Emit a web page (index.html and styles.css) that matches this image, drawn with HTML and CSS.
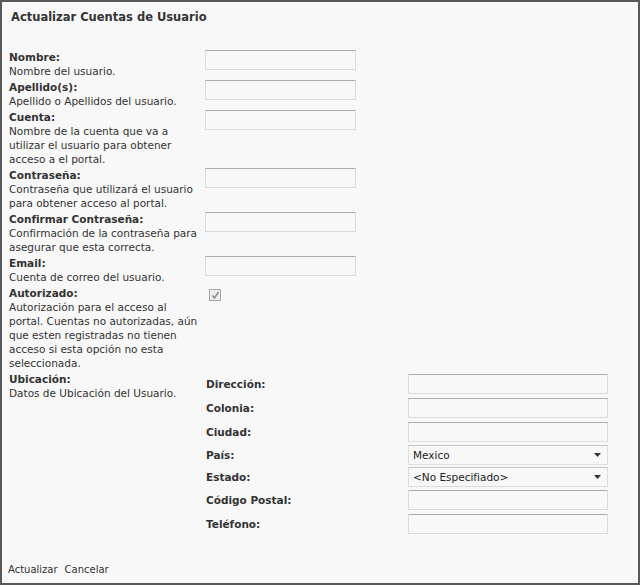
FILE: index.html
```html
<!DOCTYPE html>
<html lang="es">
<head>
<meta charset="utf-8">
<title>Actualizar Cuentas de Usuario</title>
<link rel="stylesheet" href="styles.css">
</head>
<body>
<div class="panel">
  <h1 class="title">Actualizar Cuentas de Usuario</h1>
  <div class="form">
    <div class="desc"><b>Nombre:</b><br>Nombre del usuario.</div>
    <div class="field"><span class="input"></span></div>

    <div class="desc"><b>Apellido(s):</b><br>Apellido o Apellidos del usuario.</div>
    <div class="field"><span class="input"></span></div>

    <div class="desc"><b>Cuenta:</b><br>Nombre de la cuenta que va a utilizar el usuario para obtener acceso a el portal.</div>
    <div class="field"><span class="input"></span></div>

    <div class="desc"><b>Contraseña:</b><br>Contraseña que utilizará el usuario para obtener acceso al portal.</div>
    <div class="field"><span class="input"></span></div>

    <div class="desc"><b>Confirmar Contraseña:</b><br>Confirmación de la contraseña para asegurar que esta correcta.</div>
    <div class="field"><span class="input"></span></div>

    <div class="desc"><b>Email:</b><br>Cuenta de correo del usuario.</div>
    <div class="field"><span class="input"></span></div>

    <div class="desc"><b>Autorizado:</b><br>Autorización para el acceso al portal. Cuentas no autorizadas, aún que esten registradas no tienen acceso si esta opción no esta seleccionada.</div>
    <div class="field"><span class="check"><svg width="9" height="9" viewBox="0 0 9 9"><path d="M1.5 4.5 L3.5 7 L7.5 1" fill="none" stroke="#8a8a8a" stroke-width="1.4"/></svg></span></div>

    <div class="desc"><b>Ubicación:</b><br>Datos de Ubicación del Usuario.</div>
    <div class="field">
      <div class="loc">
        <div class="loc-label">Dirección:</div><div class="loc-row"><span class="input wide"></span></div>
        <div class="loc-label">Colonia:</div><div class="loc-row"><span class="input wide"></span></div>
        <div class="loc-label">Ciudad:</div><div class="loc-row"><span class="input wide"></span></div>
        <div class="loc-label sel">País:</div><div class="loc-row sel"><span class="select">Mexico<svg class="arrow" width="7" height="4" viewBox="0 0 7 4"><path d="M0 0 H7 L3.5 4 Z" fill="#333"/></svg></span></div>
        <div class="loc-label sel">Estado:</div><div class="loc-row sel"><span class="select">&lt;No Especifiado&gt;<svg class="arrow" width="7" height="4" viewBox="0 0 7 4"><path d="M0 0 H7 L3.5 4 Z" fill="#333"/></svg></span></div>
        <div class="loc-label">Código Postal:</div><div class="loc-row"><span class="input wide"></span></div>
        <div class="loc-label">Teléfono:</div><div class="loc-row"><span class="input wide"></span></div>
      </div>
    </div>
  </div>
  <div class="actions"><span class="link">Actualizar</span><span class="link">Cancelar</span></div>
</div>
</body>
</html>
```

FILE: styles.css
```css
html, body {
  margin: 0;
  padding: 0;
  background: #ffffff;
}
body {
  font-family: "DejaVu Sans", "Liberation Sans", sans-serif;
  font-size: 10.5px;
  color: #333333;
}
.panel {
  box-sizing: border-box;
  width: 640px;
  height: 585px;
  border: 2px solid #5a5a5a;
  background: #f8f8f8;
  display: flex;
  flex-direction: column;
  padding: 0 0 0 7px;
}
.title {
  margin: 0;
  padding: 8px 0 0 2px;
  font-size: 11.5px;
  font-weight: bold;
  line-height: 14px;
  color: #333;
}
.form {
  margin-top: 26px;
  display: grid;
  grid-template-columns: 196px 1fr;
  row-gap: 2px;
  align-items: start;
}
.desc {
  line-height: 14px;
  padding-right: 2px;
}
.desc b {
  font-weight: bold;
}
.field {
  display: flex;
  align-items: flex-start;
}
.input {
  display: block;
  box-sizing: border-box;
  width: 151px;
  height: 20px;
  border: 1px solid #dcdcdc;
  border-top-color: #ababab;
  background: #f8f8f8;
}
.input.wide {
  width: 200px;
}
.check {
  display: flex;
  align-items: center;
  justify-content: center;
  box-sizing: border-box;
  width: 12px;
  height: 12px;
  margin: 3px 0 0 4px;
  border: 1px solid #a8a8a8;
  background: #ececec;
}
.loc {
  display: grid;
  grid-template-columns: 203px 200px;
  align-items: center;
}
.loc-label {
  font-weight: bold;
  height: 24px;
  line-height: 24px;
  padding-left: 1px;
}
.loc-label.sel {
  height: 22px;
  line-height: 22px;
}
.loc-row {
  height: 24px;
  display: flex;
  align-items: center;
}
.loc-row.sel {
  height: 22px;
}
.select {
  box-sizing: border-box;
  width: 200px;
  height: 20px;
  border: 1px solid #dcdcdc;
  border-top-color: #c4c4c4;
  background: #f8f8f8;
  display: flex;
  align-items: center;
  justify-content: space-between;
  padding: 0 6px 0 4px;
  color: #222;
}
.arrow {
  display: block;
}
.actions {
  margin: auto 0 0 -1px;
  padding-bottom: 6px;
  display: flex;
  gap: 7px;
  font-size: 10px;
  line-height: 14px;
}
.link {
  color: #333;
}
```
